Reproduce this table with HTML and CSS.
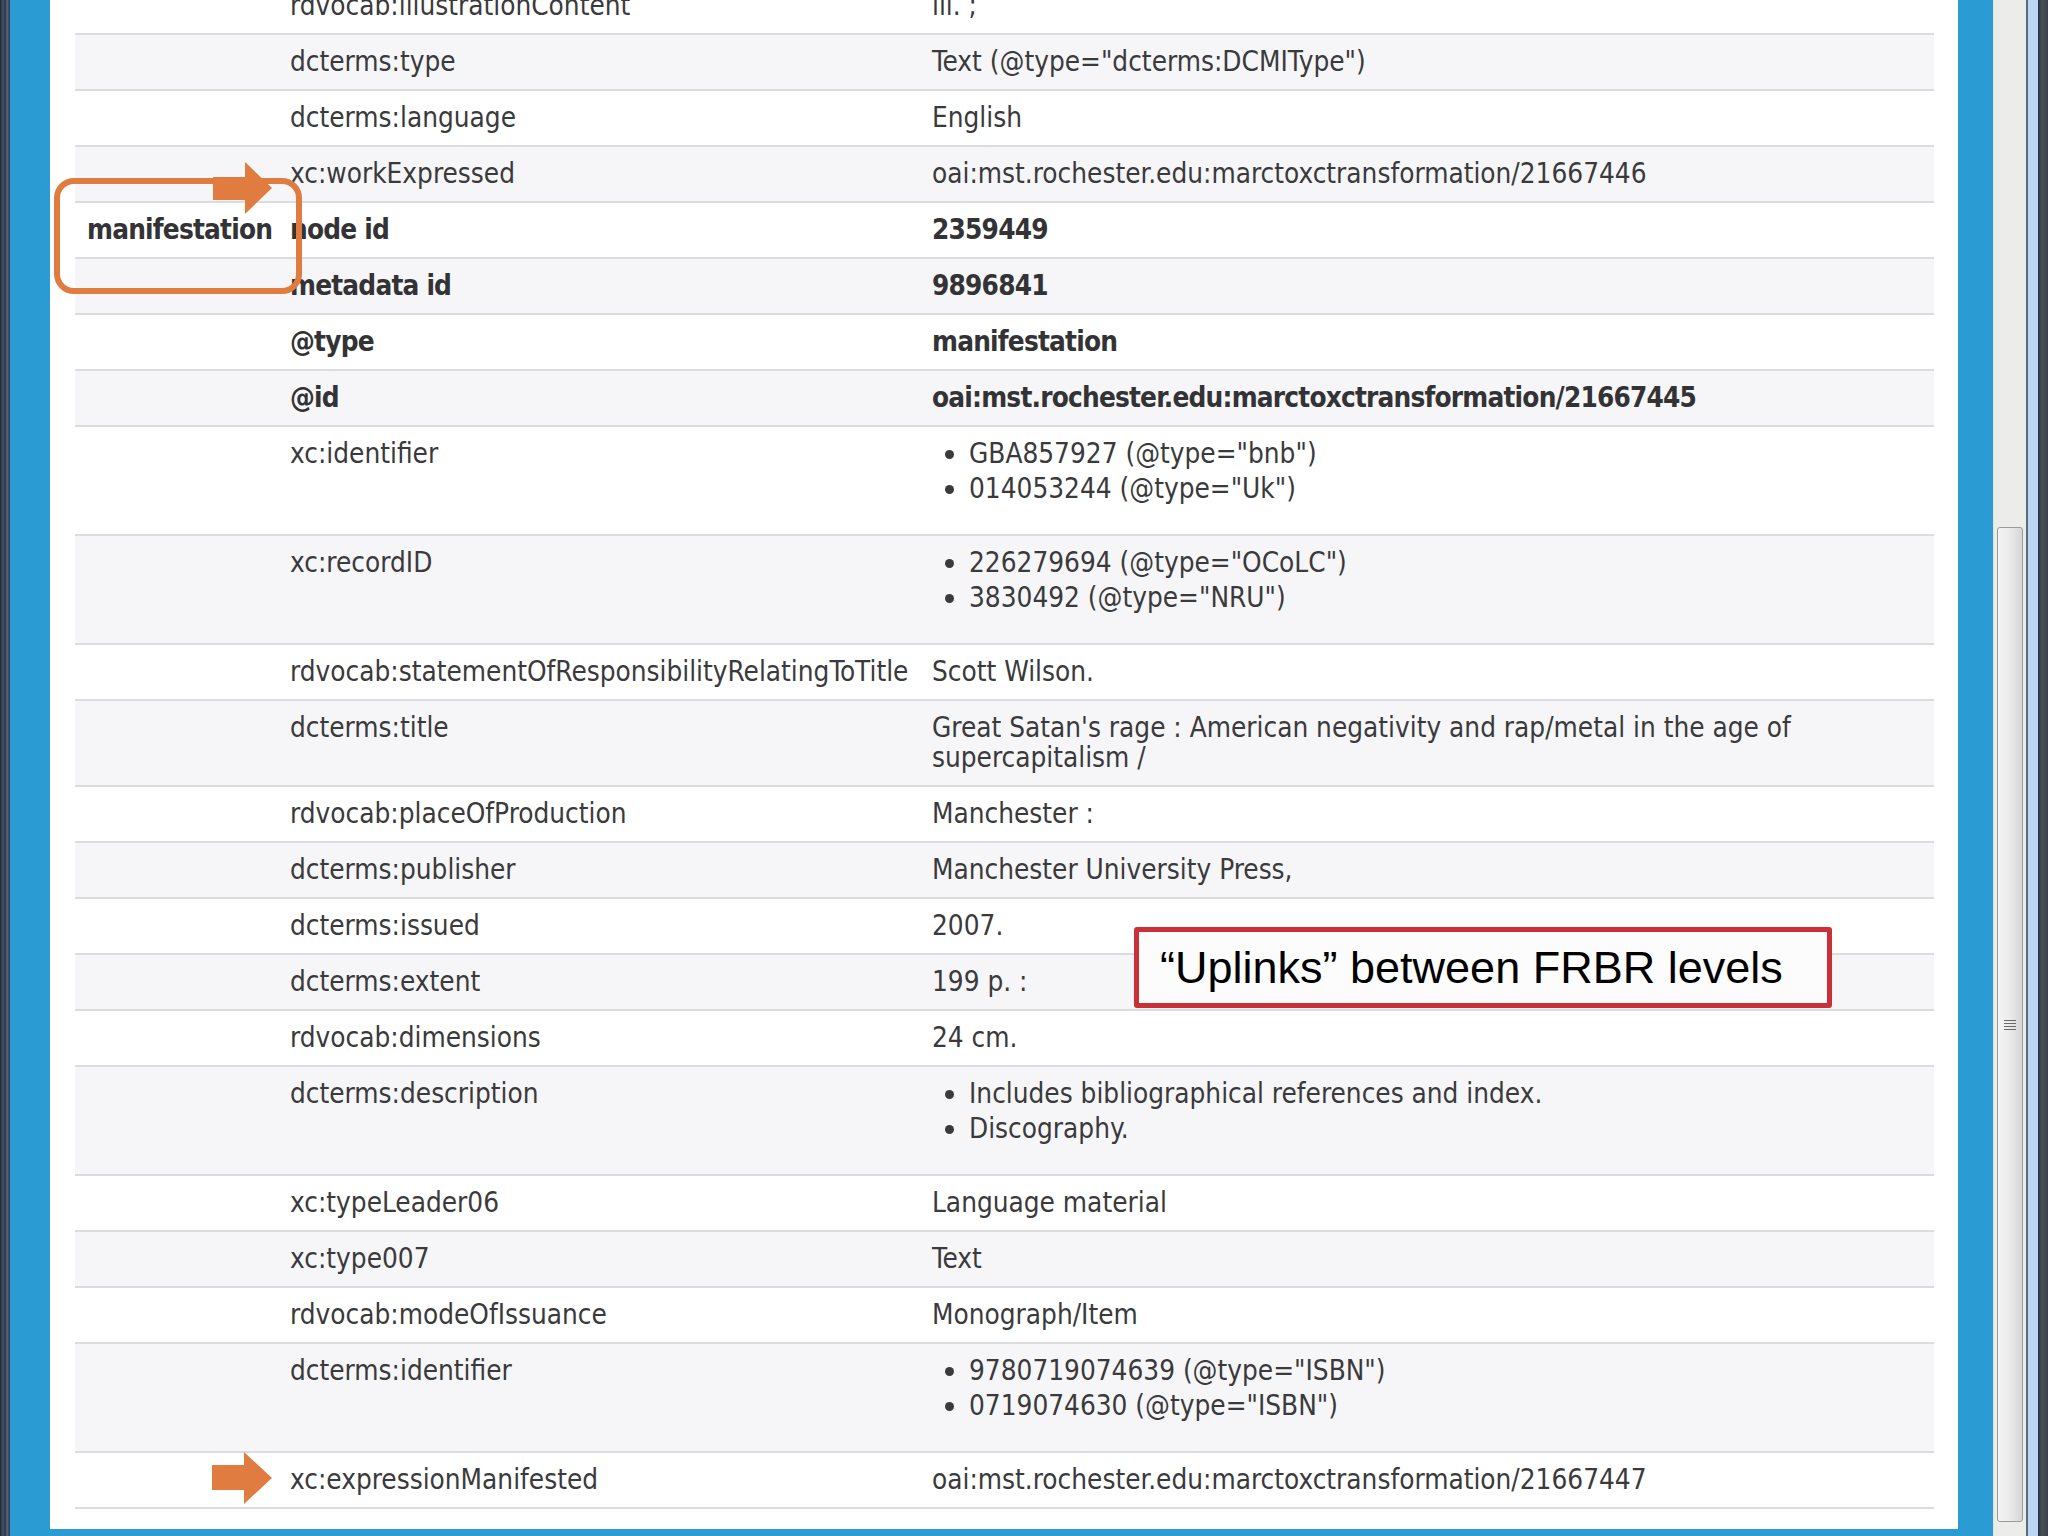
FILE: index.html
```html
<!DOCTYPE html>
<html lang="en">
<head>
<meta charset="utf-8">
<title>Manifestation record</title>
<link rel="stylesheet" href="styles.css">
</head>
<body>
<div class="screen">
  <div class="desk-left"></div>
  <div class="window">
    <div class="panel">
      <table class="record">
        <colgroup><col class="c1"><col class="c2"><col class="c3"></colgroup>
        <tbody>
          <tr><td></td><td>rdvocab:illustrationContent</td><td>ill. ;</td></tr>
          <tr><td></td><td>dcterms:type</td><td>Text (@type="dcterms:DCMIType")</td></tr>
          <tr><td></td><td>dcterms:language</td><td>English</td></tr>
          <tr><td></td><td>xc:workExpressed</td><td>oai:mst.rochester.edu:marctoxctransformation/21667446</td></tr>
          <tr class="b"><td>manifestation</td><td>node id</td><td>2359449</td></tr>
          <tr class="b"><td></td><td>metadata id</td><td>9896841</td></tr>
          <tr class="b"><td></td><td>@type</td><td>manifestation</td></tr>
          <tr class="b"><td></td><td>@id</td><td>oai:mst.rochester.edu:marctoxctransformation/21667445</td></tr>
          <tr><td></td><td>xc:identifier</td><td><ul><li>GBA857927 (@type="bnb")</li><li>014053244 (@type="Uk")</li></ul></td></tr>
          <tr><td></td><td>xc:recordID</td><td><ul><li>226279694 (@type="OCoLC")</li><li>3830492 (@type="NRU")</li></ul></td></tr>
          <tr><td></td><td>rdvocab:statementOfResponsibilityRelatingToTitle</td><td>Scott Wilson.</td></tr>
          <tr><td></td><td>dcterms:title</td><td>Great Satan's rage : American negativity and rap/metal in the age of supercapitalism /</td></tr>
          <tr><td></td><td>rdvocab:placeOfProduction</td><td>Manchester :</td></tr>
          <tr><td></td><td>dcterms:publisher</td><td>Manchester University Press,</td></tr>
          <tr><td></td><td>dcterms:issued</td><td>2007.</td></tr>
          <tr><td></td><td>dcterms:extent</td><td>199 p. :</td></tr>
          <tr><td></td><td>rdvocab:dimensions</td><td>24 cm.</td></tr>
          <tr><td></td><td>dcterms:description</td><td><ul><li>Includes bibliographical references and index.</li><li>Discography.</li></ul></td></tr>
          <tr><td></td><td>xc:typeLeader06</td><td>Language material</td></tr>
          <tr><td></td><td>xc:type007</td><td>Text</td></tr>
          <tr><td></td><td>rdvocab:modeOfIssuance</td><td>Monograph/Item</td></tr>
          <tr><td></td><td>dcterms:identifier</td><td><ul><li>9780719074639 (@type="ISBN")</li><li>0719074630 (@type="ISBN")</li></ul></td></tr>
          <tr><td></td><td>xc:expressionManifested</td><td>oai:mst.rochester.edu:marctoxctransformation/21667447</td></tr>
        </tbody>
      </table>

      <div class="focus-box"></div>
      <svg class="arrow arrow-top" width="60" height="52" viewBox="0 0 60 52"><path d="M0 15H32V0L59 26 32 52V38H0Z"/></svg>
      <svg class="arrow arrow-bottom" width="60" height="52" viewBox="0 0 60 52"><path d="M0 13H32V0L60 26 32 52V38H0Z"/></svg>
      <div class="callout">“Uplinks” between FRBR levels</div>
    </div>
  </div>
  <div class="scrollbar">
    <div class="thumb"><span class="grip"></span></div>
  </div>
  <div class="desk-right"></div>
</div>
</body>
</html>
```
FILE: styles.css
```css
html, body {
  margin: 0;
  padding: 0;
}
body {
  width: 2048px;
  height: 1536px;
  overflow: hidden;
  background: #2c323c;
}
.screen {
  display: flex;
  width: 2048px;
  height: 1536px;
}
.desk-left {
  width: 10px;
  flex: none;
  background: linear-gradient(to right, #1d2430 0, #46566e 3px, #273040 5px, #5a6a82 7px, #2a3445 10px);
}
.window {
  width: 1983px;
  flex: none;
  box-sizing: border-box;
  display: flex;
  padding: 0 35px 7px 40px;
  background: #2a9bd3;
}
.panel {
  flex: 1;
  position: relative;
  overflow: hidden;
  background: #ffffff;
  padding: 0 24px 0 25px;
}
.record {
  width: 100%;
  table-layout: fixed;
  border-collapse: separate;
  border-spacing: 0;
  margin-top: -21px;
  font-family: "DejaVu Sans Condensed", "DejaVu Sans", sans-serif;
  font-stretch: condensed;
  font-size: 27.7px;
  color: #3a3a3c;
}
.record col.c1 { width: 203px; }
.record col.c2 { width: 642px; }
.record td {
  padding: 12px 12px;
  line-height: 30px;
  vertical-align: top;
  border-bottom: 2px solid #dcdcde;
  white-space: normal;
}
.record tr:nth-child(even) td {
  background: #f6f6f8;
}
.record tr.b td {
  font-weight: bold;
  letter-spacing: -0.8px;
  color: #333336;
}
.record ul {
  margin: 0 0 18px;
  padding-left: 37px;
}
.record li + li {
  margin-top: 5px;
}
.focus-box {
  position: absolute;
  left: 4px;
  top: 178px;
  width: 248px;
  height: 116px;
  box-sizing: border-box;
  border: 6px solid #e07c40;
  border-radius: 20px;
}
.arrow {
  position: absolute;
  fill: #e07c40;
}
.arrow-top {
  left: 163px;
  top: 162px;
}
.arrow-bottom {
  left: 162px;
  top: 1452px;
}
.callout {
  position: absolute;
  left: 1084px;
  top: 927px;
  width: 698px;
  height: 81px;
  box-sizing: border-box;
  display: flex;
  align-items: center;
  padding-left: 21px;
  border: 5px solid #cb2f37;
  border-radius: 3px;
  background: #fcfcfc;
  font-family: "Liberation Sans", Arial, sans-serif;
  font-size: 45px;
  color: #000;
  white-space: nowrap;
}
.scrollbar {
  width: 35px;
  flex: none;
  box-sizing: border-box;
  display: flex;
  flex-direction: column;
  padding: 527px 3px 14px 3px;
  background: #ececea;
  border-left: 1px solid #e2e2e0;
  border-right: 2px solid #5b6a7c;
}
.thumb {
  flex: 1;
  display: flex;
  align-items: center;
  justify-content: center;
  border: 1px solid #9a9a9a;
  border-radius: 3px;
  background: linear-gradient(to right, #f4f4f4 0, #ececec 45%, #d6d6d6 100%);
}
.grip {
  width: 12px;
  height: 10px;
  background: repeating-linear-gradient(to bottom, #6a6a6a 0 1px, transparent 1px 3px);
}
.desk-right {
  width: 20px;
  flex: none;
  background: linear-gradient(to right, #b9d7f5 0, #b9d7f5 10px, #2b313a 10px, #4a5058 14px, #3a4048 20px);
}
```
